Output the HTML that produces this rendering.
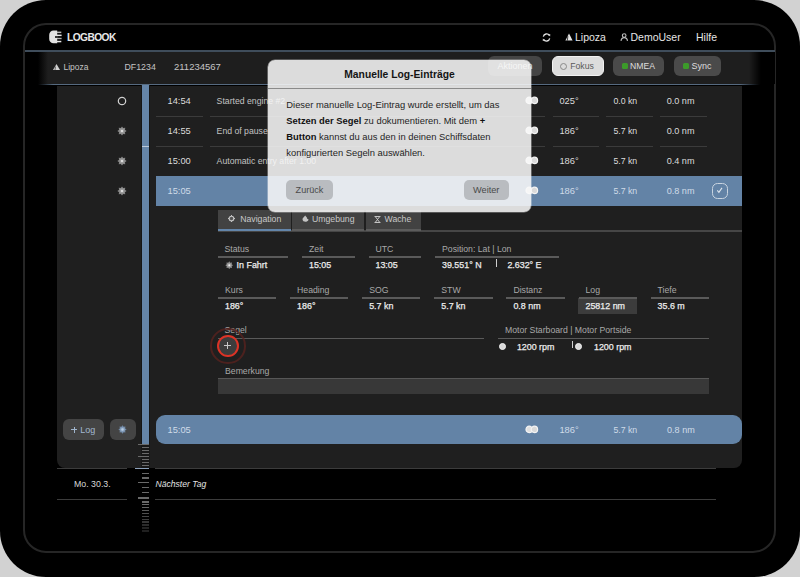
<!DOCTYPE html>
<html><head><meta charset="utf-8">
<style>
*{box-sizing:border-box;margin:0;padding:0}
html,body{width:800px;height:577px;overflow:hidden;background:#d2d2d2;font-family:"Liberation Sans",sans-serif}
.a{position:absolute}
svg{display:block}
.t{position:absolute;white-space:nowrap;line-height:14px;height:14px}
#tab{left:0;top:0;width:800px;height:577px;background:#000;border-radius:46px;overflow:hidden}
#scr{left:23.4px;top:22.85px;width:752.5px;height:530px;border:2px solid #262626;border-radius:23px}
.hdr{color:#e6e6e6;font-size:10.5px}
.sub{color:#c4c4c4;font-size:9px}
.row{color:#dcdcdc;font-size:9.3px}
.sep{position:absolute;height:1.5px;background:#3b3b3b}
.lbl{color:#a9a9a9;font-size:8.7px}
.val{color:#ececec;font-size:8.9px;-webkit-text-stroke:0.25px #ececec}
.fl{position:absolute;height:1.5px;background:#5a5a5a}
.btn{position:absolute;height:20px;border-radius:6px;background:#474747;color:#dedede;font-size:8.8px;line-height:20px}
</style></head><body>
<div id="tab" class="a">
  <div id="scr" class="a"></div>

  <!-- top header -->
  <div class="a" style="left:45px;top:27px;width:20px;height:20px">
    <svg width="20" height="20" viewBox="0 0 20 20"><path d="M8.5 3.6 H12.2 V16.3 H8.5 A4.3 4.3 0 0 1 4.2 12 V7.9 A4.3 4.3 0 0 1 8.5 3.6 Z" fill="#e2e2e2"/><rect x="12" y="4.6" width="4.3" height="1.5" fill="#b9b9b9"/><rect x="12" y="7.6" width="4.6" height="1.5" fill="#e8e8e8"/><rect x="12" y="10.8" width="4.6" height="1.4" fill="#b0b0b0"/><rect x="12" y="13.8" width="4.3" height="1.5" fill="#e8e8e8"/><rect x="10" y="9.1" width="2.3" height="1.8" fill="#222"/></svg>
  </div>
  <div class="t" style="left:67px;top:30.5px;font-size:10.2px;font-weight:bold;color:#e8e8e8;letter-spacing:-0.55px">LOGBOOK</div>

  <div class="a" style="left:542px;top:32.5px;width:9px;height:9px">
    <svg width="9" height="9" viewBox="0 0 9 9"><path d="M1.3 3.6 A3.3 3.3 0 0 1 7.4 2.6 M7.7 5.4 A3.3 3.3 0 0 1 1.6 6.4" stroke="#e0e0e0" stroke-width="1.3" fill="none"/><path d="M6.2 1.2 L8.3 1.2 L8.1 3.6 Z M2.8 7.8 L0.7 7.8 L0.9 5.4 Z" fill="#e0e0e0"/></svg>
  </div>
  <div class="a" style="left:565px;top:33px;width:8px;height:8px">
    <svg width="8" height="8" viewBox="0 0 8 8"><path d="M4 0.5 L7.6 7.5 L0.4 7.5 Z" fill="#e6e6e6"/><path d="M2.9 3.2 L2.3 7.6" stroke="#000" stroke-width="0.7"/></svg>
  </div>
  <div class="t hdr" style="left:575px;top:30px">Lipoza</div>
  <div class="a" style="left:620px;top:32px;width:9px;height:10px">
    <svg width="9" height="10" viewBox="0 0 9 10"><circle cx="4.2" cy="3.5" r="1.8" stroke="#bdbdbd" stroke-width="1.1" fill="none"/><path d="M1 8.9 C1.3 6.4 2.6 5.6 4.2 5.6 C5.8 5.6 7.2 6.4 7.5 8.9" stroke="#bdbdbd" stroke-width="1.2" fill="none"/></svg>
  </div>
  <div class="t hdr" style="left:630.5px;top:30px">DemoUser</div>
  <div class="t hdr" style="left:696px;top:30px">Hilfe</div>

  <!-- header line -->
  <div class="a" style="left:25px;top:49.6px;width:750px;height:2px;background:#3f4d5b"></div>

  <!-- sub header -->
  <div class="a" style="left:25px;top:52.2px;width:750px;height:31.5px;background:linear-gradient(90deg,#000 13px,#1e1e1e 23px,#1e1e1e 724px,#000 736px)"></div>
  <div class="a" style="left:53px;top:63.5px;width:7px;height:6px">
    <svg width="7" height="6" viewBox="0 0 7 6"><path d="M3.5 0 L7 6 L0 6 Z" fill="#d0d0d0"/><path d="M2.5 2.6 L2 6" stroke="#1e1e1e" stroke-width="0.6"/></svg>
  </div>
  <div class="t sub" style="left:63.5px;top:60px;font-size:8.5px">Lipoza</div>
  <div class="t sub" style="left:124.5px;top:60px;font-size:8.8px">DF1234</div>
  <div class="t sub" style="left:174px;top:60px;font-size:9.5px">211234567</div>

  <div class="btn" style="left:488px;top:56px;width:54px;padding-left:9.5px;font-size:9px;line-height:21px;background:#454545">Aktionen</div>
  <div class="btn" style="left:551.5px;top:56px;width:52px;background:#dcdcdc;border:1.5px solid #f2f2f2;color:#3a3a3a;line-height:18.5px;padding-left:7.5px;font-size:8.7px;color:#5a5a5a"><span style="display:inline-block;width:7px;height:7px;border:1px solid #8a8a8a;border-radius:50%;vertical-align:-1px;margin-right:3.2px"></span>Fokus</div>
  <div class="btn" style="left:612.5px;top:56px;width:51.5px;padding-left:9.5px;font-size:8.65px;line-height:21.4px;background:#4a4a4a"><span style="display:inline-block;width:6px;height:6px;border-radius:1.5px;background:#3c9a2a;vertical-align:-0.3px;margin-right:2px"></span>NMEA</div>
  <div class="btn" style="left:673.5px;top:56px;width:47px;padding-left:9.5px;font-size:9px;line-height:21.4px;background:#4a4a4a"><span style="display:inline-block;width:6px;height:6px;border-radius:1.5px;background:#3c9a2a;vertical-align:-0.3px;margin-right:2.5px"></span>Sync</div>

  <!-- sub header bottom line -->
  <div class="a" style="left:25px;top:83.7px;width:735px;height:1.8px;background:linear-gradient(90deg,#000 13px,#566a80 28px,#566a80 715px,#000 735px)"></div>

  <!-- left panel -->
  <div class="a" style="left:57px;top:86px;width:84px;height:382px;background:#1f1f1f;border-bottom-left-radius:8px"></div>
  <!-- content panel -->
  <div class="a" style="left:150px;top:86px;width:591.5px;height:382px;background:#1f1f1f;border-bottom-right-radius:8px"></div>
  <!-- timeline bar -->
  <div class="a" style="left:141px;top:85px;width:9px;height:360px;background:#151515"></div>
  <div class="a" style="left:142px;top:85px;width:7px;height:359px;background:#6585a8"></div>
  <div class="a" style="left:142px;top:145.8px;width:7px;height:1.4px;background:#bccadb"></div>

  <!-- rows -->
  <div class="a" style="left:155.5px;top:176px;width:586px;height:29.5px;background:#6383a6"></div>
  <div class="a" style="left:117px;top:96px"><svg width="10" height="10" viewBox="0 0 10 10"><circle cx="5" cy="5" r="3.7" stroke="#cfcfcf" stroke-width="1.2" fill="none"/></svg></div>
  <div class="t row" style="left:167.5px;top:94px;color:#dcdcdc">14:54</div>
  <div class="t row" style="left:216.6px;top:94px;font-size:8.7px;color:#c2c2c2">Started engine #2</div>
  <div class="a" style="left:525px;top:96.2px"><svg width="14" height="9" viewBox="0 0 14 9"><circle cx="4.2" cy="4.4" r="3.2" fill="#e0e0e0" stroke="#f4f4f4" stroke-width="1.2"/><circle cx="9.4" cy="4.4" r="3.2" fill="#dadada" stroke="#f4f4f4" stroke-width="1.2"/></svg></div>
  <div class="t row" style="left:559.4px;top:94px;color:#dcdcdc">025°</div>
  <div class="t row" style="left:613.4px;top:94px;color:#dcdcdc;font-size:8.75px">0.0 kn</div>
  <div class="t row" style="left:666.7px;top:94px;color:#dcdcdc;font-size:9.1px">0.0 nm</div>
  <div class="a" style="left:117px;top:126px"><svg width="10" height="10" viewBox="0 0 10 10"><path d="M5.00 0.40 L6.22 2.04 L8.25 1.75 L7.96 3.78 L9.60 5.00 L7.96 6.22 L8.25 8.25 L6.22 7.96 L5.00 9.60 L3.78 7.96 L1.75 8.25 L2.04 6.22 L0.40 5.00 L2.04 3.78 L1.75 1.75 L3.78 2.04 Z" fill="#858585"/><circle cx="5" cy="5" r="2.4" fill="#9c9c9c"/><circle cx="5" cy="5" r="1.1" fill="#ececec"/></svg></div>
  <div class="t row" style="left:167.5px;top:124px;color:#dcdcdc">14:55</div>
  <div class="t row" style="left:216.6px;top:124px;font-size:8.7px;color:#c2c2c2">End of pause</div>
  <div class="a" style="left:525px;top:126.2px"><svg width="14" height="9" viewBox="0 0 14 9"><circle cx="4.2" cy="4.4" r="3.2" fill="#e0e0e0" stroke="#f4f4f4" stroke-width="1.2"/><circle cx="9.4" cy="4.4" r="3.2" fill="#dadada" stroke="#f4f4f4" stroke-width="1.2"/></svg></div>
  <div class="t row" style="left:559.4px;top:124px;color:#dcdcdc">186°</div>
  <div class="t row" style="left:613.4px;top:124px;color:#dcdcdc;font-size:8.75px">5.7 kn</div>
  <div class="t row" style="left:666.7px;top:124px;color:#dcdcdc;font-size:9.1px">0.0 nm</div>
  <div class="a" style="left:117px;top:155.5px"><svg width="10" height="10" viewBox="0 0 10 10"><path d="M5.00 0.40 L6.22 2.04 L8.25 1.75 L7.96 3.78 L9.60 5.00 L7.96 6.22 L8.25 8.25 L6.22 7.96 L5.00 9.60 L3.78 7.96 L1.75 8.25 L2.04 6.22 L0.40 5.00 L2.04 3.78 L1.75 1.75 L3.78 2.04 Z" fill="#858585"/><circle cx="5" cy="5" r="2.4" fill="#9c9c9c"/><circle cx="5" cy="5" r="1.1" fill="#ececec"/></svg></div>
  <div class="t row" style="left:167.5px;top:153.5px;color:#dcdcdc">15:00</div>
  <div class="t row" style="left:216.6px;top:153.5px;font-size:8.7px;color:#c2c2c2">Automatic entry after 1:00</div>
  <div class="a" style="left:525px;top:155.7px"><svg width="14" height="9" viewBox="0 0 14 9"><circle cx="4.2" cy="4.4" r="3.2" fill="#e0e0e0" stroke="#f4f4f4" stroke-width="1.2"/><circle cx="9.4" cy="4.4" r="3.2" fill="#dadada" stroke="#f4f4f4" stroke-width="1.2"/></svg></div>
  <div class="t row" style="left:559.4px;top:153.5px;color:#dcdcdc">186°</div>
  <div class="t row" style="left:613.4px;top:153.5px;color:#dcdcdc;font-size:8.75px">5.7 kn</div>
  <div class="t row" style="left:666.7px;top:153.5px;color:#dcdcdc;font-size:9.1px">0.4 nm</div>
  <div class="a" style="left:117px;top:185.5px"><svg width="10" height="10" viewBox="0 0 10 10"><path d="M5.00 0.40 L6.22 2.04 L8.25 1.75 L7.96 3.78 L9.60 5.00 L7.96 6.22 L8.25 8.25 L6.22 7.96 L5.00 9.60 L3.78 7.96 L1.75 8.25 L2.04 6.22 L0.40 5.00 L2.04 3.78 L1.75 1.75 L3.78 2.04 Z" fill="#858585"/><circle cx="5" cy="5" r="2.4" fill="#9c9c9c"/><circle cx="5" cy="5" r="1.1" fill="#ececec"/></svg></div>
  <div class="t row" style="left:167.5px;top:183.5px;color:#cfdbe8">15:05</div>
  <div class="a" style="left:525px;top:185.7px"><svg width="14" height="9" viewBox="0 0 14 9"><circle cx="4.2" cy="4.4" r="3.2" fill="#e0e0e0" stroke="#f4f4f4" stroke-width="1.2"/><circle cx="9.4" cy="4.4" r="3.2" fill="#dadada" stroke="#f4f4f4" stroke-width="1.2"/></svg></div>
  <div class="t row" style="left:559.4px;top:183.5px;color:#cfdbe8">186°</div>
  <div class="t row" style="left:613.4px;top:183.5px;color:#cfdbe8;font-size:8.75px">5.7 kn</div>
  <div class="t row" style="left:666.7px;top:183.5px;color:#cfdbe8;font-size:9.1px">0.8 nm</div>
  <div class="sep" style="left:155.5px;top:115.5px;width:47.0px"></div>
  <div class="sep" style="left:209.5px;top:115.5px;width:335.5px"></div>
  <div class="sep" style="left:552.5px;top:115.5px;width:46.5px"></div>
  <div class="sep" style="left:606px;top:115.5px;width:47px"></div>
  <div class="sep" style="left:660px;top:115.5px;width:47px"></div>
  <div class="sep" style="left:155.5px;top:145.5px;width:47.0px"></div>
  <div class="sep" style="left:209.5px;top:145.5px;width:335.5px"></div>
  <div class="sep" style="left:552.5px;top:145.5px;width:46.5px"></div>
  <div class="sep" style="left:606px;top:145.5px;width:47px"></div>
  <div class="sep" style="left:660px;top:145.5px;width:47px"></div>
  <div class="a" style="left:711.5px;top:182.7px;width:16px;height:16.3px;border:1.4px solid #c9d4e0;border-radius:5.5px"><svg width="14" height="14" viewBox="0 0 14 14" style="position:absolute;left:0;top:0"><path d="M4.3 6.4 L5.9 8.3 L9 3.9" stroke="#dde5ee" stroke-width="1.1" fill="none"/></svg></div>
  <!-- tabs -->
  <div class="a" style="left:217.5px;top:230px;width:524px;height:2px;background:#464646"></div>
  <div class="a" style="left:217.5px;top:210px;width:73px;height:21px;background:#424242"></div>
  <div class="a" style="left:217.5px;top:228.5px;width:73px;height:2px;background:#6385aa"></div>
  <div class="a" style="left:227.5px;top:214.8px"><svg width="7" height="7" viewBox="0 0 7 7"><circle cx="3.5" cy="3.5" r="2.3" stroke="#c4c4c4" stroke-width="1.1" fill="#555"/><path d="M3.5 0 V1.1 M3.5 5.9 V7 M0 3.5 H1.1 M5.9 3.5 H7" stroke="#c4c4c4" stroke-width="1"/></svg></div>
  <div class="t" style="left:240.2px;top:212px;font-size:8.7px;color:#c8c8c8">Navigation</div>
  <div class="a" style="left:292px;top:210px;width:71.5px;height:21px;background:#424242"></div>
  <div class="a" style="left:292px;top:229.4px;width:71.5px;height:2px;background:#5c5c5c"></div>
  <div class="a" style="left:301.5px;top:215px"><svg width="7" height="7" viewBox="0 0 7 7"><path d="M3.2 0.4 C3.8 1.6 5.2 2.2 5.2 3.8 L6.6 4.4 C6 6.2 4.6 6.8 3.4 6.8 C2 6.8 0.5 6 0.5 4.3 C0.5 2.6 2.2 2 3.2 0.4 Z" fill="#c4c4c4"/></svg></div>
  <div class="t" style="left:312px;top:212px;font-size:8.7px;color:#c8c8c8">Umgebung</div>
  <div class="a" style="left:365.7px;top:210px;width:55px;height:21px;background:#424242"></div>
  <div class="a" style="left:365.7px;top:229.4px;width:55px;height:2px;background:#5c5c5c"></div>
  <div class="a" style="left:374.1px;top:215.9px"><svg width="7" height="7" viewBox="0 0 7 7"><path d="M0.6 0.5 H6.4 M0.6 6.5 H6.4 M1.2 0.5 L5.8 6.5 M5.8 0.5 L1.2 6.5" stroke="#c4c4c4" stroke-width="1" fill="none"/></svg></div>
  <div class="t" style="left:384.5px;top:212px;font-size:8.7px;color:#c8c8c8">Wache</div>

  <!-- fields row 1 -->
  <div class="t lbl" style="left:224.5px;top:242px">Status</div>
  <div class="fl" style="left:217.5px;top:256px;width:70.5px"></div>
  <div class="t val" style="left:224.5px;top:258px"><svg width="8.5" height="8.5" viewBox="0 0 10 10" style="display:inline-block;vertical-align:-1.3px;margin-right:3.6px"><path d="M5.00 0.40 L6.22 2.04 L8.25 1.75 L7.96 3.78 L9.60 5.00 L7.96 6.22 L8.25 8.25 L6.22 7.96 L5.00 9.60 L3.78 7.96 L1.75 8.25 L2.04 6.22 L0.40 5.00 L2.04 3.78 L1.75 1.75 L3.78 2.04 Z" fill="#8a8a8a"/><circle cx="5" cy="5" r="2.4" fill="#a0a0a0"/><circle cx="5" cy="5" r="1.1" fill="#f0f0f0"/></svg>In Fahrt</div>
  <div class="t lbl" style="left:309px;top:242px">Zeit</div>
  <div class="fl" style="left:302px;top:256px;width:52.5px"></div>
  <div class="t val" style="left:309px;top:258px">15:05</div>
  <div class="t lbl" style="left:375.5px;top:242px">UTC</div>
  <div class="fl" style="left:368.5px;top:256px;width:52.5px"></div>
  <div class="t val" style="left:375.5px;top:258px">13:05</div>
  <div class="t lbl" style="left:442px;top:242px">Position: Lat | Lon</div>
  <div class="fl" style="left:435px;top:256px;width:123.5px"></div>
  <div class="t val" style="left:442px;top:258px">39.551° N</div>
  <div class="a" style="left:495.7px;top:259px;width:1px;height:8px;background:#cfcfcf"></div>
  <div class="t val" style="left:507.4px;top:258px">2.632° E</div>

  <!-- fields row 2 -->
  <div class="a" style="left:578.2px;top:297.5px;width:58.5px;height:16px;background:#3c3c3c"></div>
  <div class="t lbl" style="left:225.0px;top:282.5px">Kurs</div>
  <div class="fl" style="left:218.0px;top:297px;width:58.30000000000001px"></div>
  <div class="t val" style="left:225.0px;top:299px">186°</div>
  <div class="t lbl" style="left:297.1px;top:282.5px">Heading</div>
  <div class="fl" style="left:290.1px;top:297px;width:58.30000000000001px"></div>
  <div class="t val" style="left:297.1px;top:299px">186°</div>
  <div class="t lbl" style="left:369.2px;top:282.5px">SOG</div>
  <div class="fl" style="left:362.2px;top:297px;width:58.30000000000001px"></div>
  <div class="t val" style="left:369.2px;top:299px">5.7 kn</div>
  <div class="t lbl" style="left:441.29999999999995px;top:282.5px">STW</div>
  <div class="fl" style="left:434.29999999999995px;top:297px;width:58.30000000000001px"></div>
  <div class="t val" style="left:441.29999999999995px;top:299px">5.7 kn</div>
  <div class="t lbl" style="left:513.4px;top:282.5px">Distanz</div>
  <div class="fl" style="left:506.4px;top:297px;width:58.299999999999955px"></div>
  <div class="t val" style="left:513.4px;top:299px">0.8 nm</div>
  <div class="t lbl" style="left:585.5px;top:282.5px">Log</div>
  <div class="fl" style="left:578.5px;top:297px;width:58.299999999999955px"></div>
  <div class="t val" style="left:585.5px;top:299px">25812 nm</div>
  <div class="t lbl" style="left:657.5999999999999px;top:282.5px">Tiefe</div>
  <div class="fl" style="left:650.5999999999999px;top:297px;width:58.299999999999955px"></div>
  <div class="t val" style="left:657.5999999999999px;top:299px">35.6 m</div>

  <!-- segel / motor -->
  <div class="t lbl" style="left:224.5px;top:323px">Segel</div>
  <div class="fl" style="left:217.5px;top:337.5px;width:266.5px"></div>
  <div class="t lbl" style="left:505px;top:322.7px">Motor Starboard | Motor Portside</div>
  <div class="fl" style="left:498px;top:337.5px;width:211px"></div>
  <div class="a" style="left:498.7px;top:342.7px;width:7px;height:7px;border-radius:50%;background:#d8d8d8;border:1.2px solid #f0f0f0"></div>
  <div class="t val" style="left:516.9px;top:339.5px">1200 rpm</div>
  <div class="a" style="left:571.6px;top:340.8px;width:1px;height:7.5px;background:#cfcfcf"></div>
  <div class="a" style="left:575.2px;top:342.7px;width:7px;height:7px;border-radius:50%;background:#d8d8d8;border:1.2px solid #f0f0f0"></div>
  <div class="t val" style="left:594px;top:339.5px">1200 rpm</div>
  <div class="a" style="left:210px;top:328.2px;width:35.5px;height:35.5px;border-radius:50%;border:2.3px solid rgba(88,34,30,0.8)"></div>
  <div class="a" style="left:216.8px;top:334.9px;width:21.8px;height:21.8px;border-radius:50%;border:2px solid #dc3326;background:#3c3c3c"></div>
  <div class="a" style="left:224.2px;top:345.2px;width:7px;height:1.2px;background:#c8c8c8"></div>
  <div class="a" style="left:227.1px;top:342.3px;width:1.2px;height:7px;background:#c8c8c8"></div>

  <!-- bemerkung -->
  <div class="t lbl" style="left:225px;top:363.5px">Bemerkung</div>
  <div class="a" style="left:217.5px;top:377.5px;width:491.5px;height:16.3px;background:#383838;border-top:1.5px solid #575757"></div>

  <!-- bottom row -->
  <div class="a" style="left:155.5px;top:414.5px;width:586px;height:29.5px;background:#6383a6;border-radius:9px"></div>
  <div class="t row" style="left:167.5px;top:423px;color:#cfdbe8">15:05</div>
  <div class="a" style="left:525px;top:425.2px"><svg width="14" height="9" viewBox="0 0 14 9"><circle cx="4.2" cy="4.4" r="3.2" fill="#e0e0e0" stroke="#f4f4f4" stroke-width="1.2"/><circle cx="9.4" cy="4.4" r="3.2" fill="#dadada" stroke="#f4f4f4" stroke-width="1.2"/></svg></div>
  <div class="t row" style="left:559.4px;top:423px;color:#cfdbe8">186°</div>
  <div class="t row" style="left:613.4px;top:423px;color:#cfdbe8;font-size:8.75px">5.7 kn</div>
  <div class="t row" style="left:667px;top:423px;color:#cfdbe8;font-size:9.1px">0.8 nm</div>
  <div class="btn" style="left:62.5px;top:419px;width:41.5px;height:20.5px;background:#444"></div>
  <div class="a" style="left:71.3px;top:429.3px;width:6.2px;height:1px;background:#9fb4cc"></div>
  <div class="a" style="left:73.9px;top:426.5px;width:1px;height:6.4px;background:#9fb4cc"></div>
  <div class="t" style="left:80.3px;top:422.5px;font-size:9px;color:#a3b8d0">Log</div>
  <div class="btn" style="left:109.5px;top:419px;width:26px;height:20.5px;background:#444"></div>
  <div class="a" style="left:117.8px;top:424.8px"><svg width="9" height="9" viewBox="0 0 10 10"><path d="M5.00 0.40 L6.22 2.04 L8.25 1.75 L7.96 3.78 L9.60 5.00 L7.96 6.22 L8.25 8.25 L6.22 7.96 L5.00 9.60 L3.78 7.96 L1.75 8.25 L2.04 6.22 L0.40 5.00 L2.04 3.78 L1.75 1.75 L3.78 2.04 Z" fill="#7189a6"/><circle cx="5" cy="5" r="2.6" fill="#8aa3c0"/><circle cx="5" cy="5" r="1.3" fill="#b9cde2"/></svg></div>

  <!-- day row -->
  <div class="a" style="left:57px;top:468px;width:70px;height:1px;background:#3c3c3c"></div>
  <div class="a" style="left:155px;top:468px;width:561px;height:1px;background:#3c3c3c"></div>
  <div class="a" style="left:57px;top:498.5px;width:70px;height:1px;background:#3c3c3c"></div>
  <div class="a" style="left:155px;top:498.5px;width:561px;height:1px;background:#3c3c3c"></div>
  <div class="t" style="left:74px;top:476.5px;font-size:8.8px;color:#d8d8d8">Mo. 30.3.</div>
  <div class="t" style="left:155.5px;top:476.5px;font-size:8.6px;font-style:italic;color:#e4e4e4">Nächster Tag</div>

  <!-- ruler -->
  <div class="a" style="left:141px;top:444px;width:9px;height:24px;background:#181818"></div>
  <div class="a" style="left:138px;top:444.0px;width:11.0px;height:1.4px;background:rgba(105,105,105,1.00)"></div>
  <div class="a" style="left:141.5px;top:447.1px;width:7.5px;height:1.4px;background:rgba(105,105,105,1.00)"></div>
  <div class="a" style="left:141.5px;top:450.0px;width:7.5px;height:1.4px;background:rgba(105,105,105,1.00)"></div>
  <div class="a" style="left:141.5px;top:453.0px;width:7.5px;height:1.4px;background:rgba(105,105,105,1.00)"></div>
  <div class="a" style="left:138px;top:456.1px;width:11.0px;height:1.4px;background:rgba(105,105,105,1.00)"></div>
  <div class="a" style="left:141.5px;top:458.7px;width:7.5px;height:1.4px;background:rgba(105,105,105,1.00)"></div>
  <div class="a" style="left:141.5px;top:461.6px;width:7.5px;height:1.4px;background:rgba(105,105,105,1.00)"></div>
  <div class="a" style="left:141.5px;top:464.8px;width:7.5px;height:1.4px;background:rgba(105,105,105,1.00)"></div>
  <div class="a" style="left:134.7px;top:467.9px;width:14.3px;height:1.4px;background:rgba(140,160,185,1)"></div>
  <div class="a" style="left:141.5px;top:472.6px;width:7.5px;height:1.4px;background:rgba(105,105,105,1.00)"></div>
  <div class="a" style="left:141.5px;top:477.4px;width:7.5px;height:1.4px;background:rgba(105,105,105,1.00)"></div>
  <div class="a" style="left:138px;top:482.1px;width:11.0px;height:1.4px;background:rgba(105,105,105,1.00)"></div>
  <div class="a" style="left:141.5px;top:486.8px;width:7.5px;height:1.4px;background:rgba(105,105,105,1.00)"></div>
  <div class="a" style="left:141.5px;top:491.6px;width:7.5px;height:1.4px;background:rgba(105,105,105,1.00)"></div>
  <div class="a" style="left:138px;top:497.3px;width:11.0px;height:1.4px;background:rgba(105,105,105,1.00)"></div>
  <div class="a" style="left:141.5px;top:501.2px;width:7.5px;height:1.4px;background:rgba(105,105,105,1.00)"></div>
  <div class="a" style="left:141.5px;top:503.9px;width:7.5px;height:1.4px;background:rgba(105,105,105,1.00)"></div>
  <div class="a" style="left:141.5px;top:506.7px;width:7.5px;height:1.4px;background:rgba(105,105,105,0.93)"></div>
  <div class="a" style="left:141.5px;top:509.8px;width:7.5px;height:1.4px;background:rgba(105,105,105,0.84)"></div>
  <div class="a" style="left:141.5px;top:512.8px;width:7.5px;height:1.4px;background:rgba(105,105,105,0.75)"></div>
  <div class="a" style="left:141.5px;top:515.7px;width:7.5px;height:1.4px;background:rgba(105,105,105,0.66)"></div>
  <div class="a" style="left:141.5px;top:518.5px;width:7.5px;height:1.4px;background:rgba(105,105,105,0.58)"></div>
  <div class="a" style="left:141.5px;top:521.4px;width:7.5px;height:1.4px;background:rgba(105,105,105,0.50)"></div>
  <div class="a" style="left:141.5px;top:524.4px;width:7.5px;height:1.4px;background:rgba(105,105,105,0.41)"></div>
  <div class="a" style="left:141.5px;top:527.2px;width:7.5px;height:1.4px;background:rgba(105,105,105,0.33)"></div>
  <div class="a" style="left:141.5px;top:530.3px;width:7.5px;height:1.4px;background:rgba(105,105,105,0.30)"></div>
  <!-- modal -->
  <div class="a" style="left:268px;top:60px;width:263px;height:151.5px;background:rgba(249,249,249,0.865);border-radius:7px;box-shadow:0 0 0 0.6px rgba(255,255,255,0.5)">
    <div class="t" style="left:0;width:263px;text-align:center;top:7.5px;font-size:10.3px;font-weight:bold;color:#141414">Manuelle Log-Einträge</div>
    <div class="a" style="left:0;top:27.5px;width:263px;height:1.5px;background:#8a8a8a"></div>
    <div class="a" style="left:18.3px;top:36.5px;width:240px;font-size:9.4px;line-height:16.2px;color:#1f1f1f;white-space:nowrap">Dieser manuelle Log-Eintrag wurde erstellt, um das<br><b style="color:#111">Setzen der Segel</b> zu dokumentieren. Mit dem <b style="color:#111">+</b><br><b style="color:#111">Button</b> kannst du aus den in deinen Schiffsdaten<br>konfigurierten Segeln auswählen.</div>
    <div class="btn" style="left:18px;top:120px;width:47px;height:19.5px;line-height:21px;background:#b9bcc0;color:#4a4a4a;font-size:9.1px;text-align:center;border-radius:5px">Zurück</div>
    <div class="btn" style="left:196px;top:120px;width:44.5px;height:19.5px;line-height:21px;background:#b9bcc0;color:#4a4a4a;font-size:9.2px;text-align:center;border-radius:5px">Weiter</div>
  </div>

</div>
</body></html>
